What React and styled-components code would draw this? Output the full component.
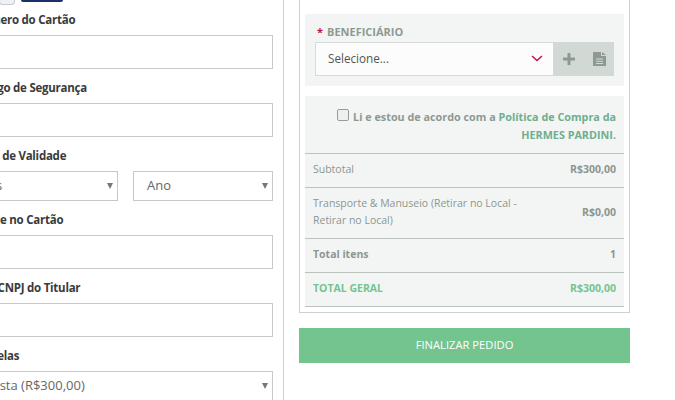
import React from 'react';
import styled, { createGlobalStyle } from 'styled-components';

const GlobalStyle = createGlobalStyle`
  html, body {
    margin: 0;
    padding: 0;
    height: 400px;
    overflow: hidden;
    background: #fff;
    font-family: "Open Sans", "Noto Sans", sans-serif;
  }
  * { box-sizing: border-box; }
`;

const Page = styled.div`
  display: flex;
  align-items: flex-start;
  width: 712px;
  height: 400px;
  margin-left: -37px;
  overflow: hidden;
`;

const LeftColumn = styled.div`
  width: 321px;
  height: 400px;
  flex-shrink: 0;
  padding-right: 10px;
  border-right: 1px solid #d0d0d0;
`;

const CardBrands = styled.div`
  display: flex;
  gap: 6px;
  height: 12px;
  padding-left: 36px;
  align-items: flex-start;
`;

const BrandLight = styled.div`
  width: 16px;
  height: 5px;
  flex-shrink: 0;
  background: #eef1f6;
  border: 1px solid #c9c9c9;
  border-top: 0;
  border-radius: 0 0 4px 4px;
`;

const BrandDark = styled.div`
  width: 42px;
  height: 2px;
  flex-shrink: 0;
  background: #1d2f6b;
  border-radius: 0 0 2px 2px;
`;

const Field = styled.div`
  margin-bottom: 11px;
`;

const Label = styled.div`
  font-size: 11.5px;
  letter-spacing: -0.25px;
  font-weight: 700;
  line-height: 16px;
  height: 16px;
  color: #3a3a3a;
  white-space: nowrap;
  padding-left: 10px;
  margin-bottom: 7px;
`;

const Input = styled.div`
  height: 34px;
  background: #fff;
  border: 1px solid #c8c8c8;
`;

const SelectRow = styled.div`
  display: flex;
  gap: 15px;
`;

const Select = styled.div`
  position: relative;
  flex: ${(p) => (p.$width ? `0 0 ${p.$width}px` : '1 1 0')};
  height: 30px;
  display: flex;
  align-items: center;
  padding: 0 0 2px 13px;
  font-size: 13px;
  color: #666;
  background: #fff;
  border: 1px solid #c8c8c8;
`;

const Arrow = styled.span`
  position: absolute;
  right: 4px;
  top: 11px;
  width: 0;
  height: 0;
  border-left: 3px solid transparent;
  border-right: 3px solid transparent;
  border-top: 6px solid #777;
`;

const RightColumn = styled.div`
  width: 331px;
  margin-left: 15px;
  flex-shrink: 0;
`;

const Panel = styled.div`
  height: 313px;
  padding: 14px 5px 0;
  border: 1px solid #d0d0d0;
  border-top: 0;
`;

const BeneficiaryBox = styled.div`
  height: 72px;
  padding: 10px 10px 0;
  margin-bottom: 10px;
  background: #f3f5f4;
`;

const BeneficiaryLabel = styled.div`
  font-size: 11px;
  font-weight: 700;
  line-height: 16px;
  height: 18px;
  color: #8d9a92;
`;

const Required = styled.span`
  color: #c2143c;
  font-weight: 700;
  margin-right: 4px;
  margin-left: 2px;
`;

const InputGroup = styled.div`
  display: flex;
  height: 34px;
`;

const BeneficiarySelect = styled.div`
  flex: 1;
  display: flex;
  align-items: center;
  justify-content: space-between;
  padding: 0 10px 2px 12px;
  font-size: 11.7px;
  color: #555;
  background: #fbfcfb;
  border: 1px solid #d6dbd7;
  border-right: 0;
`;

const AddOn = styled.div`
  width: 61px;
  display: flex;
  align-items: center;
  justify-content: space-between;
  padding: 0 8px 0 10px;
  background: #d2d9d5;
`;

const SummaryBox = styled.div`
  background: #f3f5f4;
`;

const Agreement = styled.div`
  height: 58px;
  padding: 12px 8px 0 0;
  font-size: 10.8px;
  font-weight: 700;
  line-height: 18px;
  text-align: right;
  color: #8d9a92;
  border-bottom: 1px solid #bcc2be;
`;

const Checkbox = styled.input.attrs({ type: 'checkbox' })`
  appearance: none;
  display: inline-block;
  width: 12px;
  height: 12px;
  margin: 0 4px 0 0;
  vertical-align: 0;
  background: #efefef;
  border: 1px solid #9a9a9a;
  border-radius: 2px;
`;

const PolicyLink = styled.span`
  color: #6fae8f;
`;

const Row = styled.div`
  display: flex;
  align-items: center;
  justify-content: space-between;
  min-height: ${(p) => (p.$tall ? 51 : 34)}px;
  padding: 0 8px 2px;
  font-size: 10.5px;
  line-height: 17px;
  font-weight: ${(p) => (p.$bold ? 700 : 400)};
  color: ${(p) => (p.$green ? '#75c48f' : '#8d9690')};
  border-bottom: 1px solid #bcc2be;
`;

const RowLabel = styled.span`
  max-width: 215px;
`;

const RowValue = styled.span`
  font-weight: 700;
`;

const FinishButton = styled.button`
  display: block;
  width: 100%;
  height: 35px;
  margin-top: 15px;
  padding: 0 0 2px;
  font-family: inherit;
  font-size: 11.2px;
  color: #fff;
  background: #73c48f;
  border: 0;
`;

const App = () => (
  <>
    <GlobalStyle />
    <Page>
      <LeftColumn>
        <CardBrands>
          <BrandLight />
          <BrandDark />
        </CardBrands>
        <Field>
          <Label>Número do Cartão</Label>
          <Input />
        </Field>
        <Field>
          <Label>Código de Segurança</Label>
          <Input />
        </Field>
        <Field>
          <Label>Data de Validade</Label>
          <SelectRow>
            <Select>Mês<Arrow /></Select>
            <Select $width={140}>Ano<Arrow /></Select>
          </SelectRow>
        </Field>
        <Field>
          <Label>Nome no Cartão</Label>
          <Input />
        </Field>
        <Field>
          <Label>CPF/CNPJ do Titular</Label>
          <Input />
        </Field>
        <Field>
          <Label>Parcelas</Label>
          <Select>À Vista (R$300,00)<Arrow /></Select>
        </Field>
      </LeftColumn>
      <RightColumn>
        <Panel>
          <BeneficiaryBox>
            <BeneficiaryLabel><Required>*</Required>BENEFICIÁRIO</BeneficiaryLabel>
            <InputGroup>
              <BeneficiarySelect>
                Selecione...
                <svg width="12" height="7" viewBox="0 0 12 7" fill="none" stroke="#c2144a" strokeWidth="1.5">
                  <path d="M1 1l5 4.5L11 1" />
                </svg>
              </BeneficiarySelect>
              <AddOn>
                <svg width="12" height="12" viewBox="0 0 12 12" fill="#8d9a92">
                  <path d="M4.5 0h3v4.5H12v3H7.5V12h-3V7.5H0v-3h4.5z" />
                </svg>
                <svg width="13" height="14" viewBox="0 0 13 14" fill="#8d9a92">
                  <path d="M0 0h8v4h5v10H0zM9 0l4 3H9zM3 6.5v1h7v-1zM3 8.8v1h7v-1zM3 11v1h7v-1z" fillRule="evenodd" />
                </svg>
              </AddOn>
            </InputGroup>
          </BeneficiaryBox>
          <SummaryBox>
            <Agreement>
              <Checkbox />Li e estou de acordo com a <PolicyLink>Política de Compra da HERMES PARDINI.</PolicyLink>
            </Agreement>
            <Row>
              <RowLabel>Subtotal</RowLabel>
              <RowValue>R$300,00</RowValue>
            </Row>
            <Row $tall>
              <RowLabel>Transporte &amp; Manuseio (Retirar no Local - Retirar no Local)</RowLabel>
              <RowValue>R$0,00</RowValue>
            </Row>
            <Row $bold>
              <RowLabel>Total itens</RowLabel>
              <RowValue>1</RowValue>
            </Row>
            <Row $bold $green>
              <RowLabel>TOTAL GERAL</RowLabel>
              <RowValue>R$300,00</RowValue>
            </Row>
          </SummaryBox>
        </Panel>
        <FinishButton>FINALIZAR PEDIDO</FinishButton>
      </RightColumn>
    </Page>
  </>
);

export default App;
